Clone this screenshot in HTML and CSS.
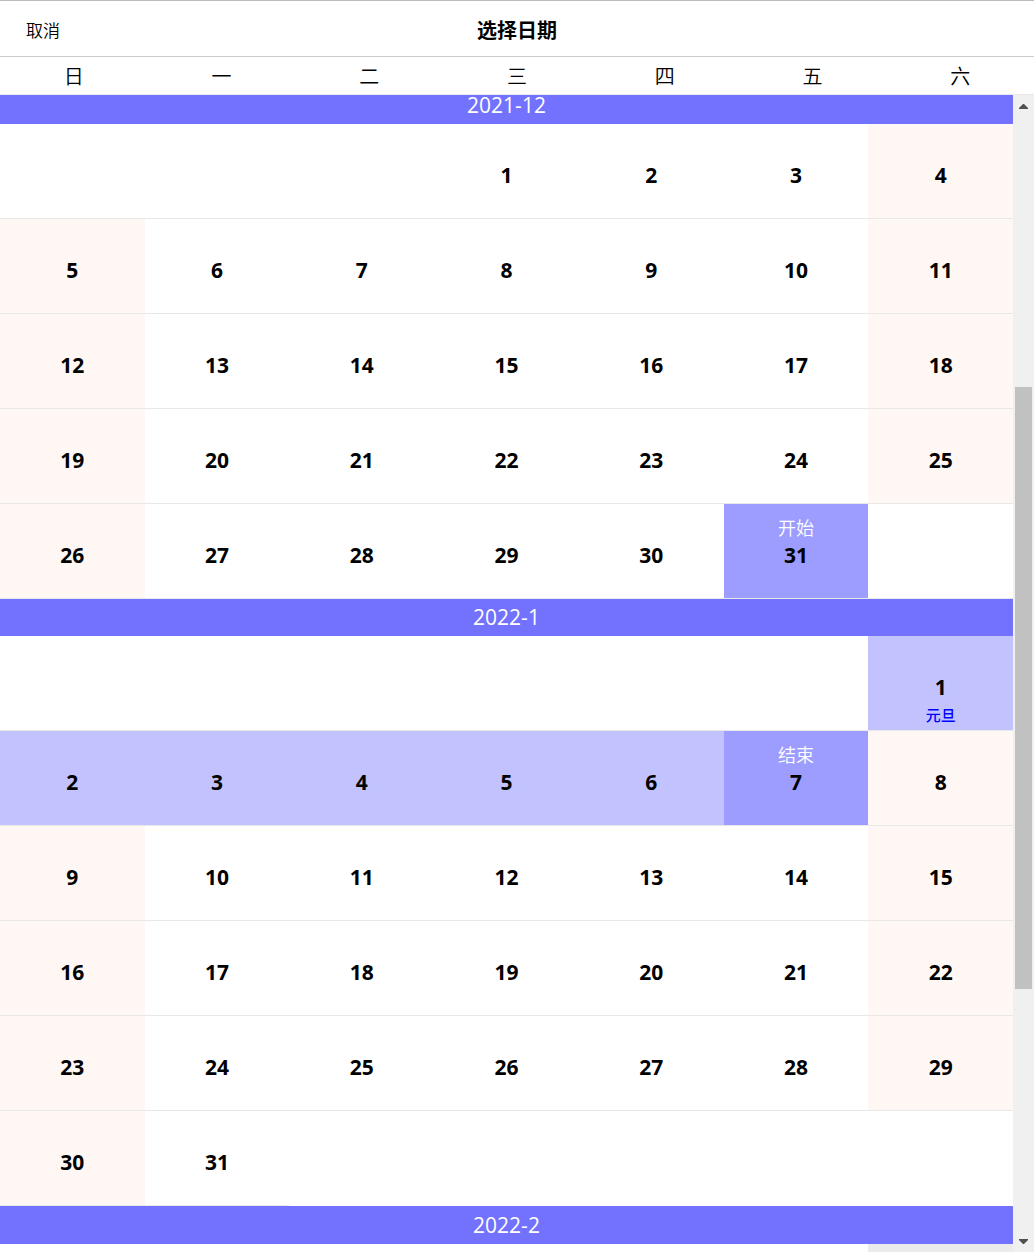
FILE: index.html
```html
<!DOCTYPE html>
<html lang="zh-CN">
<head>
<meta charset="utf-8">
<meta name="viewport" content="width=device-width, initial-scale=1">
<title>选择日期</title>
<link rel="stylesheet" href="styles.css">
</head>
<body>
<div class="picker">
  <header class="header">
    <button class="cancel" type="button">取消</button>
    <h1 class="title">选择日期</h1>
  </header>
  <div class="weekdays">
    <span>日</span><span>一</span><span>二</span><span>三</span><span>四</span><span>五</span><span>六</span>
  </div>
  <div class="body">
    <main class="months">
      <section class="month">
        <h2 class="month-name partial">2021-12</h2>
        <div class="days">
          <span class="blank lead-3"></span>
          <button class="day" type="button"><b>1</b></button>
          <button class="day" type="button"><b>2</b></button>
          <button class="day" type="button"><b>3</b></button>
          <button class="day weekend" type="button"><b>4</b></button>
          <button class="day weekend" type="button"><b>5</b></button>
          <button class="day" type="button"><b>6</b></button>
          <button class="day" type="button"><b>7</b></button>
          <button class="day" type="button"><b>8</b></button>
          <button class="day" type="button"><b>9</b></button>
          <button class="day" type="button"><b>10</b></button>
          <button class="day weekend" type="button"><b>11</b></button>
          <button class="day weekend" type="button"><b>12</b></button>
          <button class="day" type="button"><b>13</b></button>
          <button class="day" type="button"><b>14</b></button>
          <button class="day" type="button"><b>15</b></button>
          <button class="day" type="button"><b>16</b></button>
          <button class="day" type="button"><b>17</b></button>
          <button class="day weekend" type="button"><b>18</b></button>
          <button class="day weekend" type="button"><b>19</b></button>
          <button class="day" type="button"><b>20</b></button>
          <button class="day" type="button"><b>21</b></button>
          <button class="day" type="button"><b>22</b></button>
          <button class="day" type="button"><b>23</b></button>
          <button class="day" type="button"><b>24</b></button>
          <button class="day weekend" type="button"><b>25</b></button>
          <button class="day weekend" type="button"><b>26</b></button>
          <button class="day" type="button"><b>27</b></button>
          <button class="day" type="button"><b>28</b></button>
          <button class="day" type="button"><b>29</b></button>
          <button class="day" type="button"><b>30</b></button>
          <button class="day edge" type="button"><span class="mark">开始</span><b>31</b></button>
          <span class="blank"></span>
        </div>
      </section>
      <section class="month">
        <h2 class="month-name">2022-1</h2>
        <div class="days">
          <span class="blank lead-6"></span>
          <button class="day range" type="button"><b>1</b><span class="holiday">元旦</span></button>
          <button class="day range" type="button"><b>2</b></button>
          <button class="day range" type="button"><b>3</b></button>
          <button class="day range" type="button"><b>4</b></button>
          <button class="day range" type="button"><b>5</b></button>
          <button class="day range" type="button"><b>6</b></button>
          <button class="day edge" type="button"><span class="mark">结束</span><b>7</b></button>
          <button class="day weekend" type="button"><b>8</b></button>
          <button class="day weekend" type="button"><b>9</b></button>
          <button class="day" type="button"><b>10</b></button>
          <button class="day" type="button"><b>11</b></button>
          <button class="day" type="button"><b>12</b></button>
          <button class="day" type="button"><b>13</b></button>
          <button class="day" type="button"><b>14</b></button>
          <button class="day weekend" type="button"><b>15</b></button>
          <button class="day weekend" type="button"><b>16</b></button>
          <button class="day" type="button"><b>17</b></button>
          <button class="day" type="button"><b>18</b></button>
          <button class="day" type="button"><b>19</b></button>
          <button class="day" type="button"><b>20</b></button>
          <button class="day" type="button"><b>21</b></button>
          <button class="day weekend" type="button"><b>22</b></button>
          <button class="day weekend" type="button"><b>23</b></button>
          <button class="day" type="button"><b>24</b></button>
          <button class="day" type="button"><b>25</b></button>
          <button class="day" type="button"><b>26</b></button>
          <button class="day" type="button"><b>27</b></button>
          <button class="day" type="button"><b>28</b></button>
          <button class="day weekend" type="button"><b>29</b></button>
          <button class="day weekend" type="button"><b>30</b></button>
          <button class="day" type="button"><b>31</b></button>
        </div>
      </section>
      <section class="month">
        <h2 class="month-name tall">2022-2</h2>
        <div class="days">
          <span class="blank lead-6"></span>
          <span class="disabled"></span>
        </div>
      </section>
    </main>
    <div class="scrollbar" aria-hidden="true">
      <svg class="arrow" viewBox="0 0 21 21"><path d="M10 9h1l4 4v1H6v-1z"/></svg>
      <div class="track"><div class="thumb"></div></div>
      <svg class="arrow" viewBox="0 0 21 21"><path d="M6 8h9v1l-4 4h-1L6 9z"/></svg>
    </div>
  </div>
</div>
</body>
</html>
```

FILE: styles.css
```css
* {
  box-sizing: border-box;
}

body {
  margin: 0;
  background: #fff;
  color: #000;
  font-family: "Open Sans", "Noto Sans CJK SC", sans-serif;
}

button {
  margin: 0;
  padding: 0;
  border: 0;
  background: none;
  color: inherit;
  font: inherit;
  cursor: pointer;
}

.picker {
  display: flex;
  flex-direction: column;
  height: 100vh;
  overflow: hidden;
}

.header {
  display: grid;
  grid-template-columns: 1fr auto 1fr;
  align-items: center;
  flex: none;
  height: 57px;
  padding: 4px 26px 0;
  border-top: 1px solid #bbb;
  border-bottom: 1px solid #ccc;
}

.cancel {
  justify-self: start;
  font-size: 17px;
  font-weight: 350;
  line-height: 24px;
}

.title {
  margin: 0;
  font-size: 20px;
  font-weight: 700;
  line-height: 28px;
}

.weekdays {
  display: grid;
  grid-template-columns: repeat(7, 1fr);
  flex: none;
  height: 38px;
  border-bottom: 1px solid #e8e8e8;
  font-size: 20px;
  font-weight: 350;
  line-height: 40px;
  text-align: center;
}

.body {
  display: flex;
  flex: 1;
  min-height: 0;
}

.months {
  flex: 1;
  overflow: hidden;
}

.month-name {
  margin: 0;
  background: #7272ff;
  color: #fff;
  font-size: 21px;
  font-weight: 400;
  line-height: 37px;
  text-align: center;
}

.month-name.partial {
  padding-bottom: 8px;
  line-height: 21px;
}

.month-name.tall {
  line-height: 38px;
}

.days {
  display: grid;
  grid-template-columns: repeat(7, 1fr);
  grid-auto-rows: 95px;
}

.day {
  display: grid;
  grid-template-rows: 26px 28px 26px;
  align-content: start;
  padding-top: 11px;
  border-bottom: 1px solid #e8e8e8;
  text-align: center;
}

.day b {
  grid-row: 2;
  font-size: 21px;
  font-weight: 700;
  line-height: 28px;
}

.blank {
  border-bottom: 1px solid #e8e8e8;
}

.lead-3 {
  grid-column: span 3;
}

.lead-6 {
  grid-column: span 6;
}

.weekend {
  background: #fff7f4;
}

.range {
  background: #c2c2ff;
}

.edge {
  background: #9d9dff;
}

.disabled {
  background: #ebebeb;
}

.mark {
  grid-row: 1;
  color: #fff;
  font-size: 18px;
  font-weight: 350;
  line-height: 26px;
}

.holiday {
  grid-row: 3;
  color: #00f;
  font-size: 15px;
  font-weight: 500;
  line-height: 28px;
}

.scrollbar {
  display: flex;
  flex-direction: column;
  flex: none;
  width: 21px;
  background: #f0f0f0;
}

.arrow {
  flex: none;
  height: 21px;
  fill: #505050;
}

.track {
  flex: 1;
  padding: 0 2px;
  display: grid;
  grid-template-rows: 271fr 602fr 242fr;
}

.thumb {
  grid-row: 2;
  background: #c1c1c1;
}
```
